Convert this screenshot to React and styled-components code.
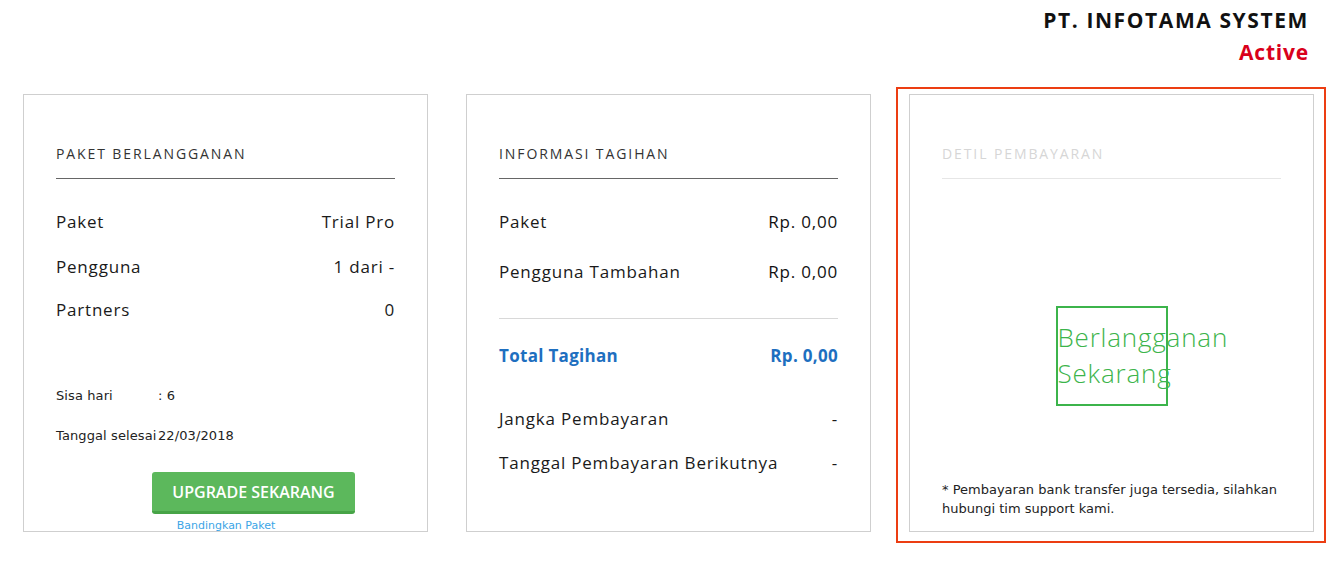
import React from "react";
import styled, { createGlobalStyle } from "styled-components";

const GlobalStyle = createGlobalStyle`
  body {
    margin: 0;
    background: #fff;
    font-family: "Open Sans", "Liberation Sans", sans-serif;
    color: #222;
  }
`;

const Page = styled.div`
  width: 1334px;
  height: 564px;
  overflow: hidden;
`;

// Header
const Header = styled.div`
  display: flex;
  flex-direction: column;
  align-items: flex-end;
  padding: 6px 25px 0 0;
  height: 79px;
  box-sizing: border-box;
`;

const Company = styled.div`
  font-size: 21px;
  font-weight: 700;
  letter-spacing: 1.6px;
  color: #111;
  line-height: 28px;
`;

const Status = styled.div`
  font-size: 21px;
  font-weight: 700;
  letter-spacing: 0.8px;
  color: #d9001b;
  line-height: 28px;
  margin-top: 4px;
`;

// Cards row
const Row = styled.div`
  display: flex;
  align-items: flex-start;
  padding-left: 23px;
`;

const Card = styled.div`
  width: 405px;
  height: 438px;
  box-sizing: border-box;
  border: 1px solid #cfcfcf;
  padding: 48px 32px 0 32px;
  display: flex;
  flex-direction: column;
  margin-top: ${(p) => p.$top || "0"};
  margin-right: ${(p) => p.$gap || "0"};
`;

const Highlight = styled.div`
  border: 2px solid #ec3d12;
  padding: 5px 10px 9px 11px;
  margin-top: 8px;
`;

const CardTitle = styled.div`
  font-size: 14px;
  line-height: 18px;
  letter-spacing: 1.9px;
  text-transform: uppercase;
  color: ${(p) => (p.$muted ? "#d6d6d6" : "#333")};
  padding: 2px 0 15px;
  border-bottom: 1px solid ${(p) => (p.$muted ? "#e6e6e6" : "#666")};
`;

const Line = styled.div`
  display: flex;
  justify-content: space-between;
  align-items: baseline;
  font-size: 17px;
  letter-spacing: ${(p) => (p.$accent ? "0.3px" : "0.8px")};
  color: ${(p) => (p.$accent ? "#1e6fc0" : "#1a1a1a")};
  font-weight: ${(p) => (p.$accent ? 700 : 400)};
  margin-top: ${(p) => p.$mt || "0"};
  line-height: 22px;
`;

const Value = styled.span`
  font-weight: ${(p) => (p.$bold ? 500 : "inherit")};
  color: #111;
`;

const Divider = styled.div`
  border-top: 1px solid #d8d8d8;
  margin-top: ${(p) => p.$mt || "0"};
`;

const SmallInfo = styled.div`
  font-family: "DejaVu Sans", sans-serif;
  font-size: 13px;
  letter-spacing: 0.1px;
  color: #222;
  margin-top: ${(p) => p.$mt || "0"};
  line-height: 16px;
  white-space: nowrap;
`;

const SmallLabel = styled.span`
  display: inline-block;
  min-width: 102px;
`;

const ButtonWrap = styled.div`
  display: flex;
  flex-direction: column;
  align-items: center;
  margin-top: 28px;
`;

const UpgradeButton = styled.button`
  width: 203px;
  height: 42px;
  margin-left: 56px;
  background: #5cb85c;
  border: none;
  border-bottom: 3px solid #47a447;
  border-radius: 3px;
  color: #fff;
  font-family: "Open Sans", "Liberation Sans", sans-serif;
  font-size: 16px;
  font-weight: 600;
  text-transform: uppercase;
  cursor: pointer;
`;

const CompareLink = styled.a`
  font-family: "DejaVu Sans", sans-serif;
  font-size: 11px;
  color: #3ba5e6;
  text-decoration: none;
  margin-top: 5px;
  margin-left: 1px;
`;

const SubscribeArea = styled.div`
  flex: 1;
  display: flex;
  justify-content: center;
  align-items: flex-start;
  padding-top: 127px;
`;

const SubscribeBox = styled.div`
  width: 112px;
  height: 100px;
  border: 2px solid #3cb44b;
  color: #3cb44b;
  font-size: 26px;
  font-weight: 300;
  letter-spacing: 0.8px;
  line-height: 36px;
  padding: 11px 0 0 0;
  box-sizing: border-box;
  white-space: nowrap;
`;

const Note = styled.div`
  font-family: "DejaVu Sans", sans-serif;
  font-size: 13px;
  line-height: 19px;
  color: #222;
  padding-bottom: 13px;
  margin-right: -8px;
`;

const App = () => {
  return (
    <Page>
      <GlobalStyle />
      <Header>
        <Company>PT. INFOTAMA SYSTEM</Company>
        <Status>Active</Status>
      </Header>
      <Row>
        <Card $gap="38px" $top="15px">
          <CardTitle>Paket Berlangganan</CardTitle>
          <Line $mt="32px">
            <span>Paket</span>
            <span>Trial Pro</span>
          </Line>
          <Line $mt="23px">
            <span>Pengguna</span>
            <span>1 dari -</span>
          </Line>
          <Line $mt="21px">
            <span>Partners</span>
            <span>0</span>
          </Line>
          <SmallInfo $mt="67px">
            <SmallLabel>Sisa hari</SmallLabel>: 6
          </SmallInfo>
          <SmallInfo $mt="24px">
            <SmallLabel>Tanggal selesai</SmallLabel>22/03/2018
          </SmallInfo>
          <ButtonWrap>
            <UpgradeButton>Upgrade Sekarang</UpgradeButton>
            <CompareLink href="#">Bandingkan Paket</CompareLink>
          </ButtonWrap>
        </Card>
        <Card $gap="25px" $top="15px">
          <CardTitle>Informasi Tagihan</CardTitle>
          <Line $mt="32px">
            <span>Paket</span>
            <Value $bold>Rp. 0,00</Value>
          </Line>
          <Line $mt="28px">
            <span>Pengguna Tambahan</span>
            <Value $bold>Rp. 0,00</Value>
          </Line>
          <Divider $mt="35px" />
          <Line $accent $mt="26px">
            <span>Total Tagihan</span>
            <span>Rp. 0,00</span>
          </Line>
          <Line $mt="41px">
            <span>Jangka Pembayaran</span>
            <span>-</span>
          </Line>
          <Line $mt="22px">
            <span>Tanggal Pembayaran Berikutnya</span>
            <span>-</span>
          </Line>
        </Card>
        <Highlight>
          <Card>
            <CardTitle $muted>Detil Pembayaran</CardTitle>
            <SubscribeArea>
              <SubscribeBox>
                Berlangganan
                <br />
                Sekarang
              </SubscribeBox>
            </SubscribeArea>
            <Note>
              * Pembayaran bank transfer juga tersedia, silahkan hubungi tim support kami.
            </Note>
          </Card>
        </Highlight>
      </Row>
    </Page>
  );
};

export default App;
